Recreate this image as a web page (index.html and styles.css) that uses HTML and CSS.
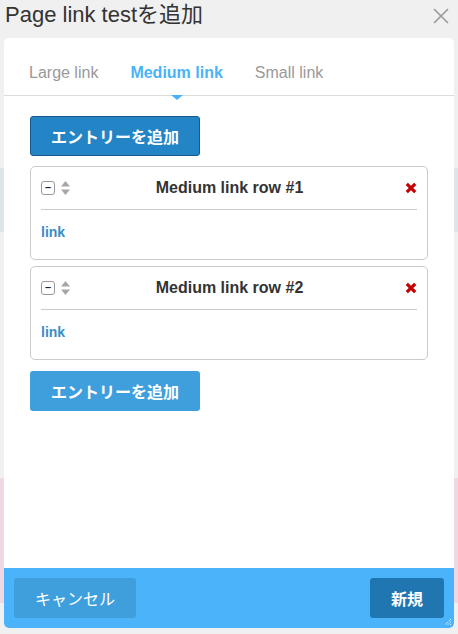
FILE: index.html
```html
<!DOCTYPE html>
<html lang="ja">

<head>
  <meta charset="UTF-8">
  <meta name="viewport" content="width=device-width, initial-scale=1.0">
  <title>Page link testを追加</title>
  <link rel="stylesheet" href="styles.css">
</head>

<body>
  <div class="modal-head">
    <h1>Page link testを追加</h1>
    <span class="close">
      <svg width="18" height="18" viewBox="0 0 18 18"><path d="M2 2L16 16M16 2L2 16" stroke="#9a9a9a" stroke-width="1.6" fill="none" /></svg>
    </span>
  </div>

  <div class="dialog">
    <div class="tabs">
      <span class="tab">Large link</span>
      <span class="tab active">Medium link</span>
      <span class="tab">Small link</span>
    </div>

    <div class="content">
      <button class="btn-add dark">エントリーを追加</button>

      <div class="row">
        <div class="row-head">
          <span class="toggle">–</span>
          <svg class="sort" width="9" height="14" viewBox="0 0 9 14"><path d="M4.5 0L9 5.5H0Z M4.5 14L0 8.5H9Z" fill="#a7a7a7" /></svg>
          <span class="row-title">Medium link row #1</span>
          <svg class="remove" width="12" height="12" viewBox="0 0 12 12"><path d="M1.8 1.8L10.2 10.2M10.2 1.8L1.8 10.2" stroke="#c40000" stroke-width="3.2" /></svg>
        </div>
        <a class="row-link">link</a>
      </div>

      <div class="row">
        <div class="row-head">
          <span class="toggle">–</span>
          <svg class="sort" width="9" height="14" viewBox="0 0 9 14"><path d="M4.5 0L9 5.5H0Z M4.5 14L0 8.5H9Z" fill="#a7a7a7" /></svg>
          <span class="row-title">Medium link row #2</span>
          <svg class="remove" width="12" height="12" viewBox="0 0 12 12"><path d="M1.8 1.8L10.2 10.2M10.2 1.8L1.8 10.2" stroke="#c40000" stroke-width="3.2" /></svg>
        </div>
        <a class="row-link">link</a>
      </div>

      <button class="btn-add">エントリーを追加</button>
    </div>

    <div class="footer">
      <button class="btn-cancel">キャンセル</button>
      <button class="btn-new">新規</button>
      <svg class="grip" width="8" height="8" viewBox="0 0 8 8"><path d="M7 1L1 7M7 3.5L3.5 7M7 6L6 7" stroke="#fff" stroke-width="1" stroke-dasharray="1 1" /></svg>
    </div>
  </div>
</body>

</html>
```

FILE: styles.css
```css
body {
  margin: 0;
  font-family: 'Liberation Sans', Arial, 'Noto Sans CJK JP', sans-serif;
  background: linear-gradient(to bottom,
      #f0f0f0 0, #f0f0f0 168px,
      #dde5e8 168px, #dde5e8 232px,
      #f0f0f0 232px, #f0f0f0 478px,
      #efd8e3 478px, #efd8e3 603px,
      #f0f0f0 603px);
  height: 634px;
  overflow: hidden;
}

.modal-head {
  display: flex;
  justify-content: space-between;
  align-items: flex-start;
  height: 38px;
  padding: 4px 8px 0 5px;
  box-sizing: border-box;
}

h1 {
  margin: 0;
  font-size: 22px;
  line-height: 1;
  font-weight: normal;
  color: #333;
}

.close {
  display: flex;
  margin-top: 3px;
}

.dialog {
  margin: 0 4px;
  height: 590px;
  background: white;
  border-radius: 5px;
  display: flex;
  flex-direction: column;
  overflow: hidden;
}

.tabs {
  display: flex;
  gap: 32px;
  height: 58px;
  padding: 26px 0 0 25px;
  box-sizing: border-box;
  border-bottom: 1px solid #dcdcdc;
}

.tab {
  font-size: 16px;
  color: #999;
  position: relative;
  height: 20px;
}

.tab.active {
  color: #4ab3f8;
  font-weight: bold;
}

.tab.active::after {
  content: '';
  position: absolute;
  left: 50%;
  top: 31px;
  margin-left: -6px;
  border-left: 6px solid transparent;
  border-right: 6px solid transparent;
  border-top: 5px solid #4ab3f8;
}

.content {
  padding: 20px 26px;
}

.btn-add {
  display: block;
  width: 170px;
  height: 40px;
  border: none;
  border-radius: 3px;
  background: #3f9fdc;
  color: white;
  font-family: 'Noto Sans CJK JP', sans-serif;
  font-size: 16px;
  font-weight: bold;
  padding: 0;
}

.btn-add.dark {
  background: #2385c6;
  border: 1px solid #17598a;
  margin-bottom: 10px;
}

.row {
  border: 1px solid #cbcbcb;
  border-radius: 5px;
  padding: 0 10px;
  height: 94px;
  box-sizing: border-box;
  margin-bottom: 6px;
}

.row + .btn-add {
  margin-top: 11px;
}

.row-head {
  display: flex;
  align-items: center;
  height: 42px;
  border-bottom: 1px solid #cbcbcb;
}

.toggle {
  width: 12px;
  height: 12px;
  border: 1px solid #999;
  border-radius: 3px;
  font-size: 11px;
  line-height: 11px;
  text-align: center;
  font-weight: bold;
  color: #222;
}

.sort {
  margin-left: 6px;
}

.row-title {
  flex: 1;
  text-align: center;
  font-size: 16px;
  font-weight: bold;
  color: #333;
  padding-right: 16px;
}

.remove {
  margin-right: 0;
}

.row-link {
  display: block;
  margin-top: 14px;
  font-size: 14px;
  font-weight: bold;
  color: #3a8ec6;
}

.footer {
  margin-top: auto;
  height: 60px;
  background: #4ab3fa;
  display: flex;
  justify-content: space-between;
  align-items: center;
  padding: 0 10px;
  position: relative;
}

.footer button {
  height: 40px;
  border: none;
  border-radius: 3px;
  color: white;
  font-family: 'Noto Sans CJK JP', sans-serif;
  font-size: 16px;
  padding: 0;
}

.btn-cancel {
  width: 122px;
  background: #3f9fdd;
}

.btn-new {
  width: 74px;
  background: #2076b1;
  font-weight: bold;
}

.grip {
  position: absolute;
  right: 2px;
  bottom: 2px;
}
```
